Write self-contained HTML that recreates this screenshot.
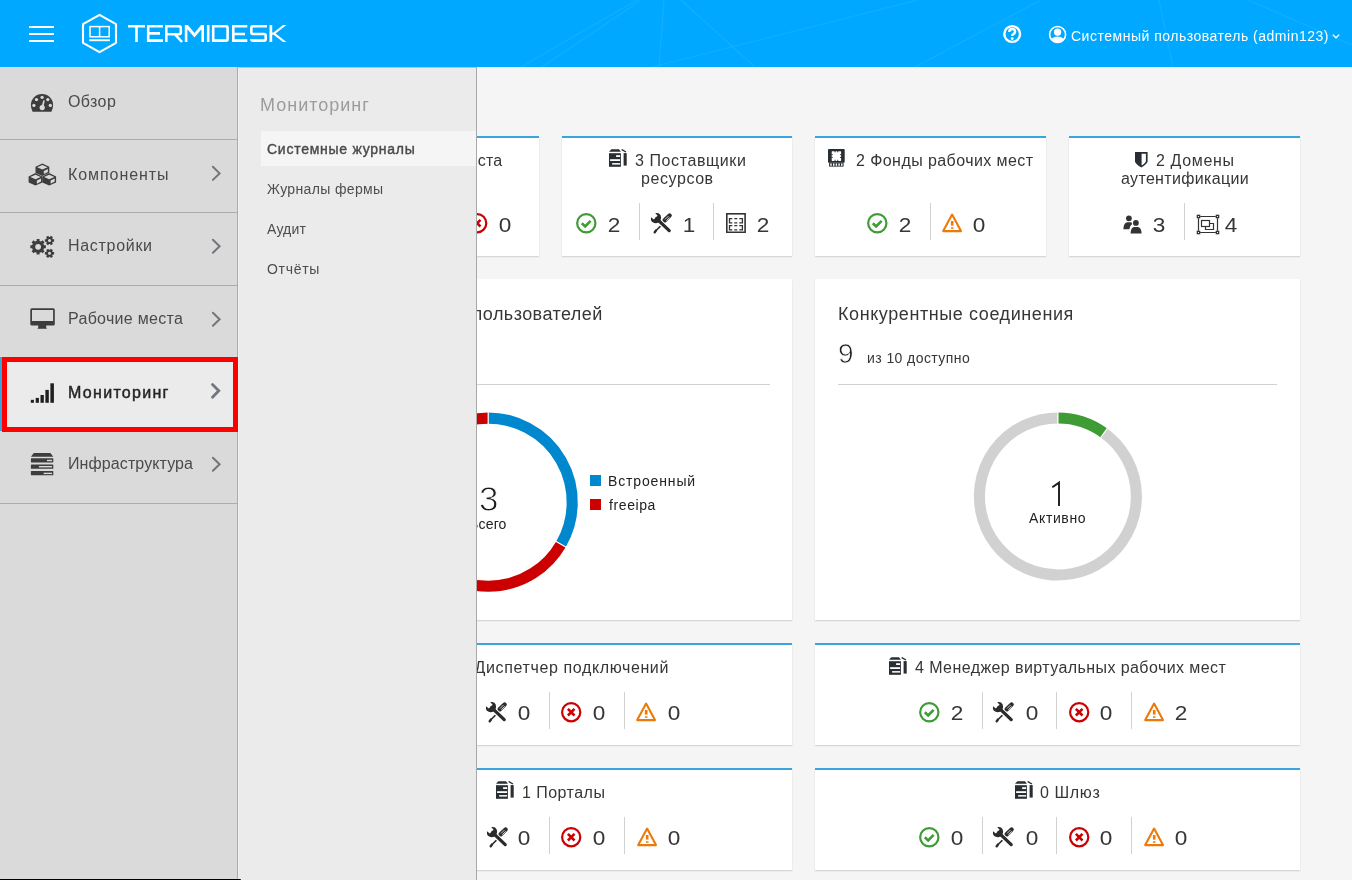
<!DOCTYPE html>
<html><head><meta charset="utf-8">
<style>
*{box-sizing:border-box;margin:0;padding:0}
html,body{width:1352px;height:880px;overflow:hidden;background:#f5f5f5;font-family:"Liberation Sans",sans-serif;position:relative}
.a{position:absolute;white-space:nowrap;line-height:1;will-change:transform}
#hdr{position:absolute;left:0;top:0;width:1352px;height:67px;background:#00a9ff;overflow:hidden}
.card{position:absolute;background:#fff;box-shadow:0 1px 1.3px rgba(3,3,3,.16)}
.acc{border-top:2px solid #39a5dc}
#side{position:absolute;left:0;top:67px;width:238px;height:813px;background:#dadada;border-right:1px solid #ababab}
.sitem{position:absolute;left:0;width:237px;border-bottom:1px solid #ababab}
#sec{position:absolute;left:238px;top:67px;width:239px;height:813px;background:#ebebeb;border-right:1px solid #a8a8a8;border-left:1px solid #f0f0f0;border-top:1px solid #c2c2c2}
.stxt{left:68px;font-size:16px;color:#4a4a4a;letter-spacing:0.4px}
.sec2{left:267px;font-size:14px;color:#4d4d4d}
</style></head><body>
<div id="hdr">
<svg class="a" style="left:0;top:0" width="1352" height="67" viewBox="0 0 1352 67">
 <g stroke="rgba(255,255,255,0.07)" stroke-width="1.2" fill="none">
  <line x1="521" y1="67" x2="637" y2="0"/>
  <line x1="542" y1="67" x2="641" y2="0"/>
  <line x1="659" y1="67" x2="664" y2="0"/>
  <line x1="681" y1="0" x2="755" y2="67"/>
  <line x1="652" y1="67" x2="918" y2="0"/>
  <line x1="915" y1="67" x2="1041" y2="0"/>
  <line x1="1159" y1="0" x2="1173" y2="67"/>
  <line x1="1248" y1="0" x2="1352" y2="45"/>
 </g>
 <g fill="#fff">
  <rect x="29" y="26" width="25" height="2"/>
  <rect x="29" y="33" width="25" height="2"/>
  <rect x="29" y="40" width="25" height="2"/>
 </g>
 <path d="M99.5 14.8 L116 24.2 L116 42.8 L99.5 52.2 L83 42.8 L83 24.2 Z" fill="none" stroke="#fff" stroke-width="2.1" stroke-linejoin="round"/>
 <rect x="90" y="26.6" width="19.2" height="10.2" fill="none" stroke="#fff" stroke-width="1.5"/>
 <line x1="99.6" y1="26.6" x2="99.6" y2="36.8" stroke="#fff" stroke-width="1.5"/>
 <rect x="89.2" y="39.3" width="20.7" height="1.9" fill="#fff"/>
 <path fill="#fff" d="M184.8 42 V25 H187.8 L194.5 33.1 L201.2 25 H204 V42 H201.4 V29.3 L194.5 37.6 L187.4 29.3 V42 Z"/>
 <path fill="#fff" d="M269.5 25 H272.2 V32.4 H273.6 L283 25 H286.4 L275.6 33.6 L286.4 42 H283 L273.6 34.8 H272.2 V42 H269.5 Z"/>
 <g stroke="#fff" stroke-width="2.6" fill="none" stroke-linejoin="miter">
  <path d="M128 26.3 H145 M136.5 26.3 V42"/>
  <path d="M162.9 26.3 H148.2 V40.6 H162.9 M148.2 33.4 H160"/>
  <path d="M166.3 42 V26.3 H179 Q180.8 26.3 180.8 28 V32.6 Q180.8 34.3 179 34.3 H166.3 M175 34.3 L182 42"/>
  
  <path d="M208.2 25 V42"/>
  <path d="M213.2 42 V26.3 H226 Q227.6 26.3 227.6 28 V38.7 Q227.6 40.6 226 40.6 H213.2"/>
  <path d="M247.3 26.3 H233.3 V40.6 H247.3 M233.3 34 H245"/>
  <path d="M267 26.3 H253 Q251.3 26.3 251.3 28 V32.3 Q251.3 34 253 34 H264 Q265.7 34 265.7 35.7 V38.9 Q265.7 40.6 264 40.6 H253 Q251.3 40.6 251.3 39"/>
  
 </g>
</svg>

<svg class="a" style="left:1002px;top:24px" width="20" height="20" viewBox="0 0 20 20">
 <circle cx="10.2" cy="10" r="7.9" fill="none" stroke="#fff" stroke-width="2.4"/>
 <path d="M7.3 8 Q7.3 5 10.2 5 Q13.1 5 13.1 7.6 Q13.1 9.3 11.4 10.1 Q10.2 10.7 10.2 12" fill="none" stroke="#fff" stroke-width="2.4"/>
 <circle cx="10.2" cy="14.6" r="1.45" fill="#fff"/>
</svg>
<svg class="a" style="left:1048px;top:25px" width="20" height="20" viewBox="0 0 20 20">
 <defs><clipPath id="uc"><circle cx="9.6" cy="9.5" r="8"/></clipPath></defs>
 <circle cx="9.6" cy="9.5" r="8" fill="none" stroke="#fff" stroke-width="1.6"/>
 <g clip-path="url(#uc)" fill="#fff">
  <circle cx="9.6" cy="7.2" r="3.6"/>
  <path d="M2 19 Q2 11.5 9.6 11.5 Q17.2 11.5 17.2 19 Z"/>
 </g>
</svg>
<div class="a" style="left:1071px;top:28.5px;font-size:14px;color:#fff;letter-spacing:0.51px">Системный пользователь (admin123)</div>
<svg class="a" style="left:1331px;top:32px" width="10" height="8" viewBox="0 0 10 8">
 <path d="M1.8 2.6 L5 5.8 L8.2 2.6" fill="none" stroke="#fff" stroke-width="1.3"/>
</svg>
</div>
<div class="card acc" style="left:309px;top:136px;width:230px;height:120px"></div>
<div class="card acc" style="left:562px;top:136px;width:230px;height:120px"></div>
<div class="card acc" style="left:815px;top:136px;width:231px;height:120px"></div>
<div class="card acc" style="left:1069px;top:136px;width:231px;height:120px"></div>
<div class="card" style="left:309px;top:279px;width:483px;height:341px"></div>
<div class="card" style="left:815px;top:279px;width:485px;height:341px"></div>
<div class="card acc" style="left:309px;top:643px;width:483px;height:102px"></div>
<div class="card acc" style="left:815px;top:643px;width:485px;height:102px"></div>
<div class="card acc" style="left:309px;top:768px;width:483px;height:102px"></div>
<div class="card acc" style="left:815px;top:768px;width:485px;height:102px"></div>
<svg class="a" style="left:608.8px;top:149px" width="19" height="18" viewBox="0 -0.2 19 18"><g fill="#292e34"><path d="M2.3 0 H10 L11.9 2.6 H0 Z"/><rect x="0" y="4" width="11.9" height="13.6"/><rect x="14.6" y="3.9" width="3.1" height="12.5"/><path d="M12.1 0.9 L13.2 -0.1 L17.3 2.2 L16.6 3.2 Z"/></g><g fill="#fff"><rect x="7.1" y="6" width="4" height="1.8"/><rect x="1.1" y="10" width="10" height="1.8"/><rect x="3.1" y="13.9" width="8" height="1.5"/></g></svg>
<svg class="a" style="left:828.2px;top:149.1px" width="17" height="18" viewBox="0 0 17 18"><g fill="#292e34"><rect x="0" y="0" width="16.7" height="13.7" rx="0.8"/><rect x="1.1" y="13.7" width="14.5" height="3.9"/></g><g fill="#fff"><rect x="3.7" y="2.2" width="9.4" height="9.7" rx="0.6"/></g><g fill="#292e34"><rect x="6.6" y="1.8" width="0.9" height="1.5"/><rect x="9.3" y="1.8" width="0.9" height="1.5"/><rect x="6.6" y="10.8" width="0.9" height="1.5"/><rect x="9.3" y="10.8" width="0.9" height="1.5"/><rect x="3.3" y="5.3" width="1.5" height="0.9"/><rect x="3.3" y="8.0" width="1.5" height="0.9"/><rect x="12.0" y="5.3" width="1.5" height="0.9"/><rect x="12.0" y="8.0" width="1.5" height="0.9"/></g><g fill="#fff"><rect x="2.3" y="14.4" width="1.4" height="2.4"/><rect x="5" y="14.4" width="1.4" height="2.4"/><rect x="7.7" y="14.4" width="1.4" height="2.4"/><rect x="10.4" y="14.4" width="1.4" height="2.4"/><rect x="13.1" y="14.4" width="1.4" height="2.4"/></g></svg>
<svg class="a" style="left:1135px;top:152px" width="13" height="16" viewBox="0 0 13 16"><path d="M0 0 H12.6 V9.2 Q12.6 11.6 6.3 15.4 Q0 11.6 0 9.2 Z" fill="#292e34"/><path d="M6.6 1.7 H10.9 V9.0 Q10.9 10.9 6.6 13.4 Z" fill="#fff"/></svg>
<svg class="a" style="left:467.3px;top:213px" width="21" height="21" viewBox="0 0 21 21"><circle cx="10.2" cy="10.2" r="9.1" fill="none" stroke="#cc0000" stroke-width="2.2"/><path d="M6.9 6.9 L13.5 13.5 M13.5 6.9 L6.9 13.5" fill="none" stroke="#cc0000" stroke-width="2.6"/></svg>
<div class="a" style="left:489.80px;top:215.00px;width:30px;text-align:center;font-size:20px;color:#363636;transform:scaleX(1.13)">0</div>
<svg class="a" style="left:576.3px;top:213px" width="21" height="21" viewBox="0 0 21 21"><circle cx="10.3" cy="10.3" r="9.15" fill="none" stroke="#3f9c35" stroke-width="2.2"/><path d="M5.8 10.3 L9.2 13.5 L14.6 7.8" fill="none" stroke="#3f9c35" stroke-width="2.6"/></svg>
<div class="a" style="left:598.50px;top:215.00px;width:30px;text-align:center;font-size:20px;color:#363636;transform:scaleX(1.13)">2</div>
<div class="a" style="left:639px;top:203px;width:1px;height:37px;background:#d1d1d1"></div>
<svg class="a" style="left:648.0px;top:210.0px" width="26" height="26" viewBox="0 0 26 26"><g stroke-linecap="round" fill="none"><path d="M12.0 16.6 L7.6 21.0" stroke="#2b2b2b" stroke-width="1.5"/><path d="M7.9 20.6 L6.7 22.2" stroke="#2b2b2b" stroke-width="2.4"/><path d="M16.6 10.4 L21.6 5.5" stroke="#2b2b2b" stroke-width="4.4"/><path d="M17.3 9.2 L20.3 6.2 M18.6 10.4 L21.4 7.6" stroke="#fff" stroke-width="0.75"/><path d="M8.6 8.6 L21.2 20.6" stroke="#fff" stroke-width="5.2"/><path d="M8.6 8.6 L21.2 20.6" stroke="#2b2b2b" stroke-width="3.3"/></g><path fill="#2b2b2b" d="M3.1 7.2 L5.8 9.6 L9.6 5.8 L7.2 3.1 Q11.0 2.2 12.6 5.2 Q13.8 8.0 12.4 10.6 L10.6 12.4 Q8.0 13.8 5.2 12.6 Q2.2 11.0 3.1 7.2 Z"/></svg>
<div class="a" style="left:673.70px;top:215.00px;width:30px;text-align:center;font-size:20px;color:#363636;transform:scaleX(1.13)">1</div>
<div class="a" style="left:713px;top:203px;width:1px;height:37px;background:#d1d1d1"></div>
<svg class="a" style="left:726px;top:213.1px" width="20" height="20" viewBox="0 0 20 20"><rect x="0.8" y="0.8" width="18.3" height="18.5" fill="none" stroke="#333" stroke-width="1.6"/><g fill="none" stroke="#333" stroke-width="1.3"><path d="M6.3 5.6 H3.5 V9.9 H6.3 M8.3 5.6 H11.3 M8.3 9.9 H11.3 M13.3 5.6 H16.4 V9.9 H13.3"/><path d="M6.3 12.6 H3.5 V16.8 H6.3 M8.3 12.6 H11.3 M8.3 16.8 H11.3 M13.3 12.6 H16.4 V16.8 H13.3"/></g></svg>
<div class="a" style="left:748.10px;top:215.00px;width:30px;text-align:center;font-size:20px;color:#363636;transform:scaleX(1.13)">2</div>
<svg class="a" style="left:866.9px;top:213px" width="21" height="21" viewBox="0 0 21 21"><circle cx="10.3" cy="10.3" r="9.15" fill="none" stroke="#3f9c35" stroke-width="2.2"/><path d="M5.8 10.3 L9.2 13.5 L14.6 7.8" fill="none" stroke="#3f9c35" stroke-width="2.6"/></svg>
<div class="a" style="left:889.70px;top:215.00px;width:30px;text-align:center;font-size:20px;color:#363636;transform:scaleX(1.13)">2</div>
<div class="a" style="left:930px;top:203px;width:1px;height:37px;background:#d1d1d1"></div>
<svg class="a" style="left:941.7px;top:213.1px" width="21" height="20" viewBox="0 0 21 20"><path d="M10.1 1.6 L19 18.1 L1.2 18.1 Z" fill="none" stroke="#ec7a08" stroke-width="2.1" stroke-linejoin="round"/><rect x="8.9" y="8" width="2.6" height="4.6" fill="#ec7a08"/><rect x="8.9" y="14.3" width="2.6" height="1.5" fill="#ec7a08"/></svg>
<div class="a" style="left:964.30px;top:215.00px;width:30px;text-align:center;font-size:20px;color:#363636;transform:scaleX(1.13)">0</div>
<svg class="a" style="left:1123px;top:214.5px" width="20" height="19" viewBox="0 0 20 19"><g fill="#333"><circle cx="5.9" cy="3.3" r="2.9"/><path d="M0.3 14.3 Q0.6 7.7 4.4 7.3 H8.3 L9.2 8.9 Q6.8 10.4 6.3 14.3 Z"/><circle cx="12.9" cy="7.9" r="2.9"/><path d="M7.6 18.5 Q7.8 12 11.2 11.9 H14.7 Q18.3 12 18.6 18.5 Z"/></g></svg>
<div class="a" style="left:1143.70px;top:215.00px;width:30px;text-align:center;font-size:20px;color:#363636;transform:scaleX(1.13)">3</div>
<div class="a" style="left:1184px;top:203px;width:1px;height:37px;background:#d1d1d1"></div>
<svg class="a" style="left:1195px;top:214px" width="26" height="22" viewBox="0 0 26 22"><g fill="none" stroke="#333" stroke-width="1.2"><path d="M5.2 2.5 H20.8 M5.2 18.5 H20.8 M3.5 4.2 V16.8 M22.5 4.2 V16.8"/></g><g fill="#333"><rect x="1.7" y="0.7" width="3.6" height="3.6"/><rect x="20.7" y="0.7" width="3.6" height="3.6"/><rect x="1.7" y="16.7" width="3.6" height="3.6"/><rect x="20.7" y="16.7" width="3.6" height="3.6"/></g><g fill="#fff"><rect x="3" y="2" width="1" height="1"/><rect x="22" y="2" width="1" height="1"/><rect x="3" y="18" width="1" height="1"/><rect x="22" y="18" width="1" height="1"/></g><g fill="none" stroke="#333" stroke-width="1.2"><rect x="6.5" y="6.5" width="8" height="6"/><path d="M14.5 9.5 H18.5 V15.5 H10.5 V12.5"/></g></svg>
<div class="a" style="left:1215.60px;top:215.00px;width:30px;text-align:center;font-size:20px;color:#363636;transform:scaleX(1.13)">4</div>
<div class="a" style="left:332px;top:384px;width:438px;height:1px;background:#d1d1d1"></div>
<div class="a" style="left:838px;top:384px;width:439px;height:1px;background:#d1d1d1"></div>
<svg class="a" style="left:0;top:0" width="1352" height="880"><path d="M488.20 418.15 A84.05 84.05 0 0 1 560.99 544.22" fill="none" stroke="#0088ce" stroke-width="11.1"/><path d="M560.99 544.22 A84.05 84.05 0 1 1 488.19 418.15" fill="none" stroke="#cc0000" stroke-width="11.1"/><line x1="488.20" y1="425.20" x2="488.20" y2="410.20" stroke="#fff" stroke-width="1.2"/><line x1="554.88" y1="540.70" x2="567.87" y2="548.20" stroke="#fff" stroke-width="1.2"/><path d="M1057.90 417.95 A78.5 78.5 0 0 1 1104.04 432.94" fill="none" stroke="#3f9c35" stroke-width="11.1"/><path d="M1104.04 432.94 A78.5 78.5 0 1 1 1057.89 417.95" fill="none" stroke="#d1d1d1" stroke-width="11.1"/><line x1="1057.90" y1="425.45" x2="1057.90" y2="410.45" stroke="#fff" stroke-width="1.2"/><line x1="1099.63" y1="439.01" x2="1108.45" y2="426.87" stroke="#fff" stroke-width="1.2"/></svg>
<svg class="a" style="left:1048px;top:478px" width="16" height="32" viewBox="1048 478 16 32"><path d="M1059 506 V482.6 L1052.3 487.2" fill="none" stroke="#1c1c1c" stroke-width="1.9" stroke-linejoin="miter"/></svg>
<div class="a" style="left:590px;top:475px;width:11px;height:11px;background:#0088ce"></div>
<div class="a" style="left:590px;top:499px;width:11px;height:11px;background:#cc0000"></div>
<svg class="a" style="left:383.8px;top:656.8px" width="19" height="18" viewBox="0 -0.2 19 18"><g fill="#292e34"><path d="M2.3 0 H10 L11.9 2.6 H0 Z"/><rect x="0" y="4" width="11.9" height="13.6"/><rect x="14.6" y="3.9" width="3.1" height="12.5"/><path d="M12.1 0.9 L13.2 -0.1 L17.3 2.2 L16.6 3.2 Z"/></g><g fill="#fff"><rect x="7.1" y="6" width="4" height="1.8"/><rect x="1.1" y="10" width="10" height="1.8"/><rect x="3.1" y="13.9" width="8" height="1.5"/></g></svg>
<svg class="a" style="left:412px;top:702.2px" width="21" height="21" viewBox="0 0 21 21"><circle cx="10.3" cy="10.3" r="9.15" fill="none" stroke="#3f9c35" stroke-width="2.2"/><path d="M5.8 10.3 L9.2 13.5 L14.6 7.8" fill="none" stroke="#3f9c35" stroke-width="2.6"/></svg>
<div class="a" style="left:434.50px;top:703.00px;width:30px;text-align:center;font-size:20px;color:#363636;transform:scaleX(1.13)">1</div>
<div class="a" style="left:474px;top:692px;width:1px;height:37px;background:#d1d1d1"></div>
<svg class="a" style="left:483.29999999999995px;top:699.2px" width="26" height="26" viewBox="0 0 26 26"><g stroke-linecap="round" fill="none"><path d="M12.0 16.6 L7.6 21.0" stroke="#2b2b2b" stroke-width="1.5"/><path d="M7.9 20.6 L6.7 22.2" stroke="#2b2b2b" stroke-width="2.4"/><path d="M16.6 10.4 L21.6 5.5" stroke="#2b2b2b" stroke-width="4.4"/><path d="M17.3 9.2 L20.3 6.2 M18.6 10.4 L21.4 7.6" stroke="#fff" stroke-width="0.75"/><path d="M8.6 8.6 L21.2 20.6" stroke="#fff" stroke-width="5.2"/><path d="M8.6 8.6 L21.2 20.6" stroke="#2b2b2b" stroke-width="3.3"/></g><path fill="#2b2b2b" d="M3.1 7.2 L5.8 9.6 L9.6 5.8 L7.2 3.1 Q11.0 2.2 12.6 5.2 Q13.8 8.0 12.4 10.6 L10.6 12.4 Q8.0 13.8 5.2 12.6 Q2.2 11.0 3.1 7.2 Z"/></svg>
<div class="a" style="left:509.40px;top:703.00px;width:30px;text-align:center;font-size:20px;color:#363636;transform:scaleX(1.13)">0</div>
<div class="a" style="left:549px;top:692px;width:1px;height:37px;background:#d1d1d1"></div>
<svg class="a" style="left:561.2px;top:702px" width="21" height="21" viewBox="0 0 21 21"><circle cx="10.2" cy="10.2" r="9.1" fill="none" stroke="#cc0000" stroke-width="2.2"/><path d="M6.9 6.9 L13.5 13.5 M13.5 6.9 L6.9 13.5" fill="none" stroke="#cc0000" stroke-width="2.6"/></svg>
<div class="a" style="left:583.90px;top:703.00px;width:30px;text-align:center;font-size:20px;color:#363636;transform:scaleX(1.13)">0</div>
<div class="a" style="left:624px;top:692px;width:1px;height:37px;background:#d1d1d1"></div>
<svg class="a" style="left:636.2px;top:702.3px" width="21" height="20" viewBox="0 0 21 20"><path d="M10.1 1.6 L19 18.1 L1.2 18.1 Z" fill="none" stroke="#ec7a08" stroke-width="2.1" stroke-linejoin="round"/><rect x="8.9" y="8" width="2.6" height="4.6" fill="#ec7a08"/><rect x="8.9" y="14.3" width="2.6" height="1.5" fill="#ec7a08"/></svg>
<div class="a" style="left:658.90px;top:703.00px;width:30px;text-align:center;font-size:20px;color:#363636;transform:scaleX(1.13)">0</div>
<svg class="a" style="left:888.8px;top:656.7px" width="19" height="18" viewBox="0 -0.2 19 18"><g fill="#292e34"><path d="M2.3 0 H10 L11.9 2.6 H0 Z"/><rect x="0" y="4" width="11.9" height="13.6"/><rect x="14.6" y="3.9" width="3.1" height="12.5"/><path d="M12.1 0.9 L13.2 -0.1 L17.3 2.2 L16.6 3.2 Z"/></g><g fill="#fff"><rect x="7.1" y="6" width="4" height="1.8"/><rect x="1.1" y="10" width="10" height="1.8"/><rect x="3.1" y="13.9" width="8" height="1.5"/></g></svg>
<svg class="a" style="left:919.4px;top:702.2px" width="21" height="21" viewBox="0 0 21 21"><circle cx="10.3" cy="10.3" r="9.15" fill="none" stroke="#3f9c35" stroke-width="2.2"/><path d="M5.8 10.3 L9.2 13.5 L14.6 7.8" fill="none" stroke="#3f9c35" stroke-width="2.6"/></svg>
<div class="a" style="left:941.50px;top:703.00px;width:30px;text-align:center;font-size:20px;color:#363636;transform:scaleX(1.13)">2</div>
<div class="a" style="left:982px;top:692px;width:1px;height:37px;background:#d1d1d1"></div>
<svg class="a" style="left:990.3px;top:699.2px" width="26" height="26" viewBox="0 0 26 26"><g stroke-linecap="round" fill="none"><path d="M12.0 16.6 L7.6 21.0" stroke="#2b2b2b" stroke-width="1.5"/><path d="M7.9 20.6 L6.7 22.2" stroke="#2b2b2b" stroke-width="2.4"/><path d="M16.6 10.4 L21.6 5.5" stroke="#2b2b2b" stroke-width="4.4"/><path d="M17.3 9.2 L20.3 6.2 M18.6 10.4 L21.4 7.6" stroke="#fff" stroke-width="0.75"/><path d="M8.6 8.6 L21.2 20.6" stroke="#fff" stroke-width="5.2"/><path d="M8.6 8.6 L21.2 20.6" stroke="#2b2b2b" stroke-width="3.3"/></g><path fill="#2b2b2b" d="M3.1 7.2 L5.8 9.6 L9.6 5.8 L7.2 3.1 Q11.0 2.2 12.6 5.2 Q13.8 8.0 12.4 10.6 L10.6 12.4 Q8.0 13.8 5.2 12.6 Q2.2 11.0 3.1 7.2 Z"/></svg>
<div class="a" style="left:1016.70px;top:703.00px;width:30px;text-align:center;font-size:20px;color:#363636;transform:scaleX(1.13)">0</div>
<div class="a" style="left:1056px;top:692px;width:1px;height:37px;background:#d1d1d1"></div>
<svg class="a" style="left:1069px;top:702px" width="21" height="21" viewBox="0 0 21 21"><circle cx="10.2" cy="10.2" r="9.1" fill="none" stroke="#cc0000" stroke-width="2.2"/><path d="M6.9 6.9 L13.5 13.5 M13.5 6.9 L6.9 13.5" fill="none" stroke="#cc0000" stroke-width="2.6"/></svg>
<div class="a" style="left:1091.30px;top:703.00px;width:30px;text-align:center;font-size:20px;color:#363636;transform:scaleX(1.13)">0</div>
<div class="a" style="left:1131px;top:692px;width:1px;height:37px;background:#d1d1d1"></div>
<svg class="a" style="left:1143.6px;top:702.3px" width="21" height="20" viewBox="0 0 21 20"><path d="M10.1 1.6 L19 18.1 L1.2 18.1 Z" fill="none" stroke="#ec7a08" stroke-width="2.1" stroke-linejoin="round"/><rect x="8.9" y="8" width="2.6" height="4.6" fill="#ec7a08"/><rect x="8.9" y="14.3" width="2.6" height="1.5" fill="#ec7a08"/></svg>
<div class="a" style="left:1165.60px;top:703.00px;width:30px;text-align:center;font-size:20px;color:#363636;transform:scaleX(1.13)">2</div>
<svg class="a" style="left:496.3px;top:781px" width="19" height="18" viewBox="0 -0.2 19 18"><g fill="#292e34"><path d="M2.3 0 H10 L11.9 2.6 H0 Z"/><rect x="0" y="4" width="11.9" height="13.6"/><rect x="14.6" y="3.9" width="3.1" height="12.5"/><path d="M12.1 0.9 L13.2 -0.1 L17.3 2.2 L16.6 3.2 Z"/></g><g fill="#fff"><rect x="7.1" y="6" width="4" height="1.8"/><rect x="1.1" y="10" width="10" height="1.8"/><rect x="3.1" y="13.9" width="8" height="1.5"/></g></svg>
<svg class="a" style="left:412px;top:827.2px" width="21" height="21" viewBox="0 0 21 21"><circle cx="10.3" cy="10.3" r="9.15" fill="none" stroke="#3f9c35" stroke-width="2.2"/><path d="M5.8 10.3 L9.2 13.5 L14.6 7.8" fill="none" stroke="#3f9c35" stroke-width="2.6"/></svg>
<div class="a" style="left:434.50px;top:828.00px;width:30px;text-align:center;font-size:20px;color:#363636;transform:scaleX(1.13)">0</div>
<div class="a" style="left:474px;top:817px;width:1px;height:37px;background:#d1d1d1"></div>
<svg class="a" style="left:483.59999999999997px;top:824.2px" width="26" height="26" viewBox="0 0 26 26"><g stroke-linecap="round" fill="none"><path d="M12.0 16.6 L7.6 21.0" stroke="#2b2b2b" stroke-width="1.5"/><path d="M7.9 20.6 L6.7 22.2" stroke="#2b2b2b" stroke-width="2.4"/><path d="M16.6 10.4 L21.6 5.5" stroke="#2b2b2b" stroke-width="4.4"/><path d="M17.3 9.2 L20.3 6.2 M18.6 10.4 L21.4 7.6" stroke="#fff" stroke-width="0.75"/><path d="M8.6 8.6 L21.2 20.6" stroke="#fff" stroke-width="5.2"/><path d="M8.6 8.6 L21.2 20.6" stroke="#2b2b2b" stroke-width="3.3"/></g><path fill="#2b2b2b" d="M3.1 7.2 L5.8 9.6 L9.6 5.8 L7.2 3.1 Q11.0 2.2 12.6 5.2 Q13.8 8.0 12.4 10.6 L10.6 12.4 Q8.0 13.8 5.2 12.6 Q2.2 11.0 3.1 7.2 Z"/></svg>
<div class="a" style="left:509.40px;top:828.00px;width:30px;text-align:center;font-size:20px;color:#363636;transform:scaleX(1.13)">0</div>
<div class="a" style="left:549px;top:817px;width:1px;height:37px;background:#d1d1d1"></div>
<svg class="a" style="left:561.4px;top:827px" width="21" height="21" viewBox="0 0 21 21"><circle cx="10.2" cy="10.2" r="9.1" fill="none" stroke="#cc0000" stroke-width="2.2"/><path d="M6.9 6.9 L13.5 13.5 M13.5 6.9 L6.9 13.5" fill="none" stroke="#cc0000" stroke-width="2.6"/></svg>
<div class="a" style="left:583.90px;top:828.00px;width:30px;text-align:center;font-size:20px;color:#363636;transform:scaleX(1.13)">0</div>
<div class="a" style="left:624px;top:817px;width:1px;height:37px;background:#d1d1d1"></div>
<svg class="a" style="left:636.6px;top:827.3px" width="21" height="20" viewBox="0 0 21 20"><path d="M10.1 1.6 L19 18.1 L1.2 18.1 Z" fill="none" stroke="#ec7a08" stroke-width="2.1" stroke-linejoin="round"/><rect x="8.9" y="8" width="2.6" height="4.6" fill="#ec7a08"/><rect x="8.9" y="14.3" width="2.6" height="1.5" fill="#ec7a08"/></svg>
<div class="a" style="left:658.90px;top:828.00px;width:30px;text-align:center;font-size:20px;color:#363636;transform:scaleX(1.13)">0</div>
<svg class="a" style="left:1014.8px;top:781px" width="19" height="18" viewBox="0 -0.2 19 18"><g fill="#292e34"><path d="M2.3 0 H10 L11.9 2.6 H0 Z"/><rect x="0" y="4" width="11.9" height="13.6"/><rect x="14.6" y="3.9" width="3.1" height="12.5"/><path d="M12.1 0.9 L13.2 -0.1 L17.3 2.2 L16.6 3.2 Z"/></g><g fill="#fff"><rect x="7.1" y="6" width="4" height="1.8"/><rect x="1.1" y="10" width="10" height="1.8"/><rect x="3.1" y="13.9" width="8" height="1.5"/></g></svg>
<svg class="a" style="left:919.4px;top:827.2px" width="21" height="21" viewBox="0 0 21 21"><circle cx="10.3" cy="10.3" r="9.15" fill="none" stroke="#3f9c35" stroke-width="2.2"/><path d="M5.8 10.3 L9.2 13.5 L14.6 7.8" fill="none" stroke="#3f9c35" stroke-width="2.6"/></svg>
<div class="a" style="left:941.50px;top:828.00px;width:30px;text-align:center;font-size:20px;color:#363636;transform:scaleX(1.13)">0</div>
<div class="a" style="left:982px;top:817px;width:1px;height:37px;background:#d1d1d1"></div>
<svg class="a" style="left:990.3px;top:824.2px" width="26" height="26" viewBox="0 0 26 26"><g stroke-linecap="round" fill="none"><path d="M12.0 16.6 L7.6 21.0" stroke="#2b2b2b" stroke-width="1.5"/><path d="M7.9 20.6 L6.7 22.2" stroke="#2b2b2b" stroke-width="2.4"/><path d="M16.6 10.4 L21.6 5.5" stroke="#2b2b2b" stroke-width="4.4"/><path d="M17.3 9.2 L20.3 6.2 M18.6 10.4 L21.4 7.6" stroke="#fff" stroke-width="0.75"/><path d="M8.6 8.6 L21.2 20.6" stroke="#fff" stroke-width="5.2"/><path d="M8.6 8.6 L21.2 20.6" stroke="#2b2b2b" stroke-width="3.3"/></g><path fill="#2b2b2b" d="M3.1 7.2 L5.8 9.6 L9.6 5.8 L7.2 3.1 Q11.0 2.2 12.6 5.2 Q13.8 8.0 12.4 10.6 L10.6 12.4 Q8.0 13.8 5.2 12.6 Q2.2 11.0 3.1 7.2 Z"/></svg>
<div class="a" style="left:1016.70px;top:828.00px;width:30px;text-align:center;font-size:20px;color:#363636;transform:scaleX(1.13)">0</div>
<div class="a" style="left:1056px;top:817px;width:1px;height:37px;background:#d1d1d1"></div>
<svg class="a" style="left:1069px;top:827px" width="21" height="21" viewBox="0 0 21 21"><circle cx="10.2" cy="10.2" r="9.1" fill="none" stroke="#cc0000" stroke-width="2.2"/><path d="M6.9 6.9 L13.5 13.5 M13.5 6.9 L6.9 13.5" fill="none" stroke="#cc0000" stroke-width="2.6"/></svg>
<div class="a" style="left:1091.30px;top:828.00px;width:30px;text-align:center;font-size:20px;color:#363636;transform:scaleX(1.13)">0</div>
<div class="a" style="left:1131px;top:817px;width:1px;height:37px;background:#d1d1d1"></div>
<svg class="a" style="left:1143.6px;top:827.3px" width="21" height="20" viewBox="0 0 21 20"><path d="M10.1 1.6 L19 18.1 L1.2 18.1 Z" fill="none" stroke="#ec7a08" stroke-width="2.1" stroke-linejoin="round"/><rect x="8.9" y="8" width="2.6" height="4.6" fill="#ec7a08"/><rect x="8.9" y="14.3" width="2.6" height="1.5" fill="#ec7a08"/></svg>
<div class="a" style="left:1165.60px;top:828.00px;width:30px;text-align:center;font-size:20px;color:#363636;transform:scaleX(1.13)">0</div>
<div class="a" style="left:376.04px;top:153.00px;font-size:16px;color:#363636;font-weight:400;letter-spacing:0.100px;">2 Рабочие места</div>
<div class="a" style="left:635.00px;top:153.00px;font-size:16px;color:#363636;font-weight:400;letter-spacing:0.592px;">3 Поставщики</div>
<div class="a" style="left:641.00px;top:171.00px;font-size:16px;color:#363636;font-weight:400;letter-spacing:0.572px;">ресурсов</div>
<div class="a" style="left:855.80px;top:153.00px;font-size:16px;color:#363636;font-weight:400;letter-spacing:0.429px;">2 Фонды рабочих мест</div>
<div class="a" style="left:1155.80px;top:153.00px;font-size:16px;color:#363636;font-weight:400;letter-spacing:0.630px;">2 Домены</div>
<div class="a" style="left:1120.90px;top:171.00px;font-size:16px;color:#363636;font-weight:400;letter-spacing:0.337px;">аутентификации</div>
<div class="a" style="left:366.14px;top:305.00px;font-size:18px;color:#363636;font-weight:400;letter-spacing:0.450px;">Количество пользователей</div>
<div class="a" style="left:837.70px;top:305.00px;font-size:18px;color:#363636;font-weight:400;letter-spacing:0.585px;">Конкурентные соединения</div>
<div class="a" style="left:838.20px;top:340.00px;font-size:28px;color:#222;font-weight:400;letter-spacing:0.300px;-webkit-text-stroke:0.7px #fff">9</div>
<div class="a" style="left:866.50px;top:351.00px;font-size:14px;color:#363636;font-weight:400;letter-spacing:0.421px;">из 10 доступно</div>
<div class="a" style="left:478.80px;top:481.00px;font-size:35px;color:#1c1c1c;font-weight:400;letter-spacing:-1.400px;-webkit-text-stroke:0.9px #fff">3</div>
<div class="a" style="left:469.20px;top:517.00px;font-size:14px;color:#222;font-weight:400;letter-spacing:0.169px;">Всего</div>
<div class="a" style="left:1029.30px;top:511.00px;font-size:14px;color:#222;font-weight:400;letter-spacing:0.630px;">Активно</div>
<div class="a" style="left:607.60px;top:474.00px;font-size:14px;color:#222;font-weight:400;letter-spacing:0.852px;">Встроенный</div>
<div class="a" style="left:608.60px;top:498.00px;font-size:14px;color:#222;font-weight:400;letter-spacing:0.597px;">freeipa</div>
<div class="a" style="left:460.19px;top:660.00px;font-size:16px;color:#363636;font-weight:400;letter-spacing:0.620px;">1 Диспетчер подключений</div>
<div class="a" style="left:914.60px;top:660.00px;font-size:16px;color:#363636;font-weight:400;letter-spacing:0.420px;">4 Менеджер виртуальных рабочих мест</div>
<div class="a" style="left:521.90px;top:785.00px;font-size:16px;color:#363636;font-weight:400;letter-spacing:0.466px;">1 Порталы</div>
<div class="a" style="left:1040.40px;top:785.00px;font-size:16px;color:#363636;font-weight:400;letter-spacing:0.611px;">0 Шлюз</div>
<div id="side">
<div class="sitem" style="top:0;height:73px"></div>
<div class="sitem" style="top:73px;height:73px"></div>
<div class="sitem" style="top:146px;height:73px"></div>
<div class="sitem" style="top:219px;height:72px"></div>
<div class="sitem" style="top:291px;height:73px"></div>
<div class="sitem" style="top:364px;height:73px"></div>
</div>
<div class="a" style="left:0;top:357px;width:2px;height:74px;background:#39a5dc"></div>
<div class="a" style="left:2px;top:357px;width:236px;height:75px;border:5px solid #ff0000;background:#ebebeb"></div>

<svg class="a" style="left:0;top:0" width="238" height="500" viewBox="0 0 238 500">
 <g fill="#3d3d3d">
  <path d="M32.6 111.8 Q30.9 108.5 30.9 105.1 A11.1 11.1 0 0 1 53.1 105.1 Q53.1 108.5 51.4 111.8 Z"/>
 </g>
 <g fill="#dadada">
  <circle cx="42.1" cy="97.3" r="1.65"/><circle cx="36.5" cy="99.6" r="1.65"/><circle cx="47.8" cy="99.6" r="1.65"/>
  <circle cx="33.9" cy="105.4" r="1.65"/><circle cx="50.3" cy="105.4" r="1.65"/>
  <circle cx="42.2" cy="107.6" r="2.6"/>
  <path d="M41.3 107.2 L43.4 100.3 L44.8 100.6 L43.3 107.6Z"/>
 </g>
 <path fill="#3d3d3d" d="M42.4 163.4 L49.3 166.70000000000002 L49.3 172.70000000000002 L42.4 175.9 L35.5 172.70000000000002 L35.5 166.70000000000002Z"/><path fill="#dadada" d="M42.4 165.0 L47.6 167.3 L42.4 169.6 L37.199999999999996 167.3Z"/><path fill="#dadada" d="M43.8 170.9 L47.9 168.9 L47.9 171.9 L43.8 174.1Z"/><path fill="#3d3d3d" d="M35.5 173.1 L42.4 176.4 L42.4 182.4 L35.5 185.6 L28.6 182.4 L28.6 176.4Z"/><path fill="#dadada" d="M35.5 174.7 L40.7 177.0 L35.5 179.29999999999998 L30.3 177.0Z"/><path fill="#dadada" d="M36.9 180.6 L41.0 178.6 L41.0 181.6 L36.9 183.79999999999998Z"/><path fill="#3d3d3d" d="M49.2 173.1 L56.1 176.4 L56.1 182.4 L49.2 185.6 L42.300000000000004 182.4 L42.300000000000004 176.4Z"/><path fill="#dadada" d="M49.2 174.7 L54.400000000000006 177.0 L49.2 179.29999999999998 L44.0 177.0Z"/><path fill="#dadada" d="M50.6 180.6 L54.7 178.6 L54.7 181.6 L50.6 183.79999999999998Z"/>
 <path fill="#3d3d3d" fill-rule="evenodd" d="M35.77 241.16 L36.60 240.89 L36.66 239.03 L39.54 239.03 L39.60 240.89 L40.43 241.16 L41.22 241.56 L42.57 240.29 L44.61 242.33 L43.34 243.68 L43.74 244.47 L44.01 245.30 L45.87 245.36 L45.87 248.24 L44.01 248.30 L43.74 249.13 L43.34 249.92 L44.61 251.27 L42.57 253.31 L41.22 252.04 L40.43 252.44 L39.60 252.71 L39.54 254.57 L36.66 254.57 L36.60 252.71 L35.77 252.44 L34.98 252.04 L33.63 253.31 L31.59 251.27 L32.86 249.92 L32.46 249.13 L32.19 248.30 L30.33 248.24 L30.33 245.36 L32.19 245.30 L32.46 244.47 L32.86 243.68 L31.59 242.33 L33.63 240.29 L34.98 241.56ZM41.00 246.80 A2.9 2.9 0 1 0 35.20 246.80 A2.9 2.9 0 1 0 41.00 246.80Z"/>
 <path fill="#3d3d3d" fill-rule="evenodd" d="M49.50 237.00 L50.07 237.05 L50.72 235.86 L52.91 237.12 L52.21 238.28 L52.53 238.75 L52.77 239.26 L54.13 239.23 L54.13 241.77 L52.77 241.74 L52.53 242.25 L52.21 242.72 L52.91 243.88 L50.72 245.14 L50.07 243.95 L49.50 244.00 L48.93 243.95 L48.28 245.14 L46.09 243.88 L46.79 242.72 L46.47 242.25 L46.23 241.74 L44.87 241.77 L44.87 239.23 L46.23 239.26 L46.47 238.75 L46.79 238.28 L46.09 237.12 L48.28 235.86 L48.93 237.05ZM51.00 240.50 A1.5 1.5 0 1 0 48.00 240.50 A1.5 1.5 0 1 0 51.00 240.50Z"/>
 <path fill="#3d3d3d" fill-rule="evenodd" d="M49.50 249.80 L50.07 249.85 L50.72 248.66 L52.91 249.92 L52.21 251.08 L52.53 251.55 L52.77 252.06 L54.13 252.03 L54.13 254.57 L52.77 254.54 L52.53 255.05 L52.21 255.52 L52.91 256.68 L50.72 257.94 L50.07 256.75 L49.50 256.80 L48.93 256.75 L48.28 257.94 L46.09 256.68 L46.79 255.52 L46.47 255.05 L46.23 254.54 L44.87 254.57 L44.87 252.03 L46.23 252.06 L46.47 251.55 L46.79 251.08 L46.09 249.92 L48.28 248.66 L48.93 249.85ZM51.00 253.30 A1.5 1.5 0 1 0 48.00 253.30 A1.5 1.5 0 1 0 51.00 253.30Z"/>
 <path fill="#3d3d3d" fill-rule="evenodd" d="M31.8 308.3 H53.3 Q54.8 308.3 54.8 309.8 V324.1 Q54.8 325.6 53.3 325.6 H46.3 L46.1 327.2 L47 328.7 H37.4 L38.3 327.2 L38.3 325.6 H31.8 Q30.3 325.6 30.3 324.1 V309.8 Q30.3 308.3 31.8 308.3 Z M32 310.1 V320.9 H53.1 V310.1 Z"/>
 <g fill="#1f1f1f">
  <rect x="30.8" y="399.8" width="3.1" height="3"/>
  <rect x="35.7" y="397.9" width="3.2" height="4.9"/>
  <rect x="40.5" y="395" width="3.3" height="7.8"/>
  <rect x="45.4" y="389.9" width="3.4" height="12.9"/>
  <rect x="50.4" y="383.3" width="3.5" height="19.5"/>
 </g>
 <g fill="#3d3d3d">
  <path d="M33.8 452.9 H50.4 L53.3 456.8 H30.9 Z"/>
  <rect x="30.9" y="458.2" width="22.4" height="4.2" rx="0.6"/>
  <rect x="30.9" y="464.4" width="22.4" height="4.4" rx="0.6"/>
  <rect x="30.9" y="471" width="22.4" height="4.3" rx="0.6"/>
 </g>
 <g fill="#dadada">
  <rect x="47" y="459.8" width="5" height="1.4"/>
  <rect x="38.9" y="466" width="13.1" height="1.4"/>
  <rect x="43.6" y="472.7" width="8.4" height="1.4"/>
 </g>
 <g fill="none" stroke="#72767b" stroke-width="2" stroke-linecap="round" stroke-linejoin="miter">
  <path d="M212.9 166.8 L219.6 173.4 L212.9 179.9"/>
  <path d="M212.9 239.7 L219.6 246.3 L212.9 252.8"/>
  <path d="M212.9 312.7 L219.6 319.3 L212.9 325.8"/>
  <path d="M212.9 457.7 L219.6 464.3 L212.9 470.8"/>
 </g>
 <path d="M212.5 384.4 L218.8 390.8 L212.5 397.3" fill="none" stroke="#72767b" stroke-width="2.8" stroke-linecap="round"/>
</svg>
<div class="a stxt" style="top:93.5px">Обзор</div>
<div class="a stxt" style="top:166.7px;letter-spacing:0.93px">Компоненты</div>
<div class="a stxt" style="top:238.3px;letter-spacing:0.7px">Настройки</div>
<div class="a stxt" style="top:311.3px;letter-spacing:0.3px">Рабочие места</div>
<div class="a stxt" style="top:384.7px;color:#252525;letter-spacing:1.3px;-webkit-text-stroke:0.45px #252525">Мониторинг</div>
<div class="a stxt" style="top:456.4px;letter-spacing:0.1px">Инфраструктура</div>

<div id="sec"></div>
<div class="a" style="left:261px;top:131px;width:215px;height:35px;background:#f5f5f5"></div>
<div class="a" style="left:260.3px;top:96.2px;font-size:18px;color:#9c9c9c;letter-spacing:1.0px">Мониторинг</div>
<div class="a sec2" style="top:142px;color:#4a4a4a;letter-spacing:0.74px;-webkit-text-stroke:0.4px #4a4a4a">Системные журналы</div>
<div class="a sec2" style="top:181.6px;letter-spacing:0.36px">Журналы фермы</div>
<div class="a sec2" style="top:221.6px;letter-spacing:0.2px">Аудит</div>
<div class="a sec2" style="top:261.6px;letter-spacing:0.7px">Отчёты</div>

<div class="a" style="left:0;top:879px;width:241px;height:1px;background:#000;border-top-right-radius:1px"></div>
</body></html>
